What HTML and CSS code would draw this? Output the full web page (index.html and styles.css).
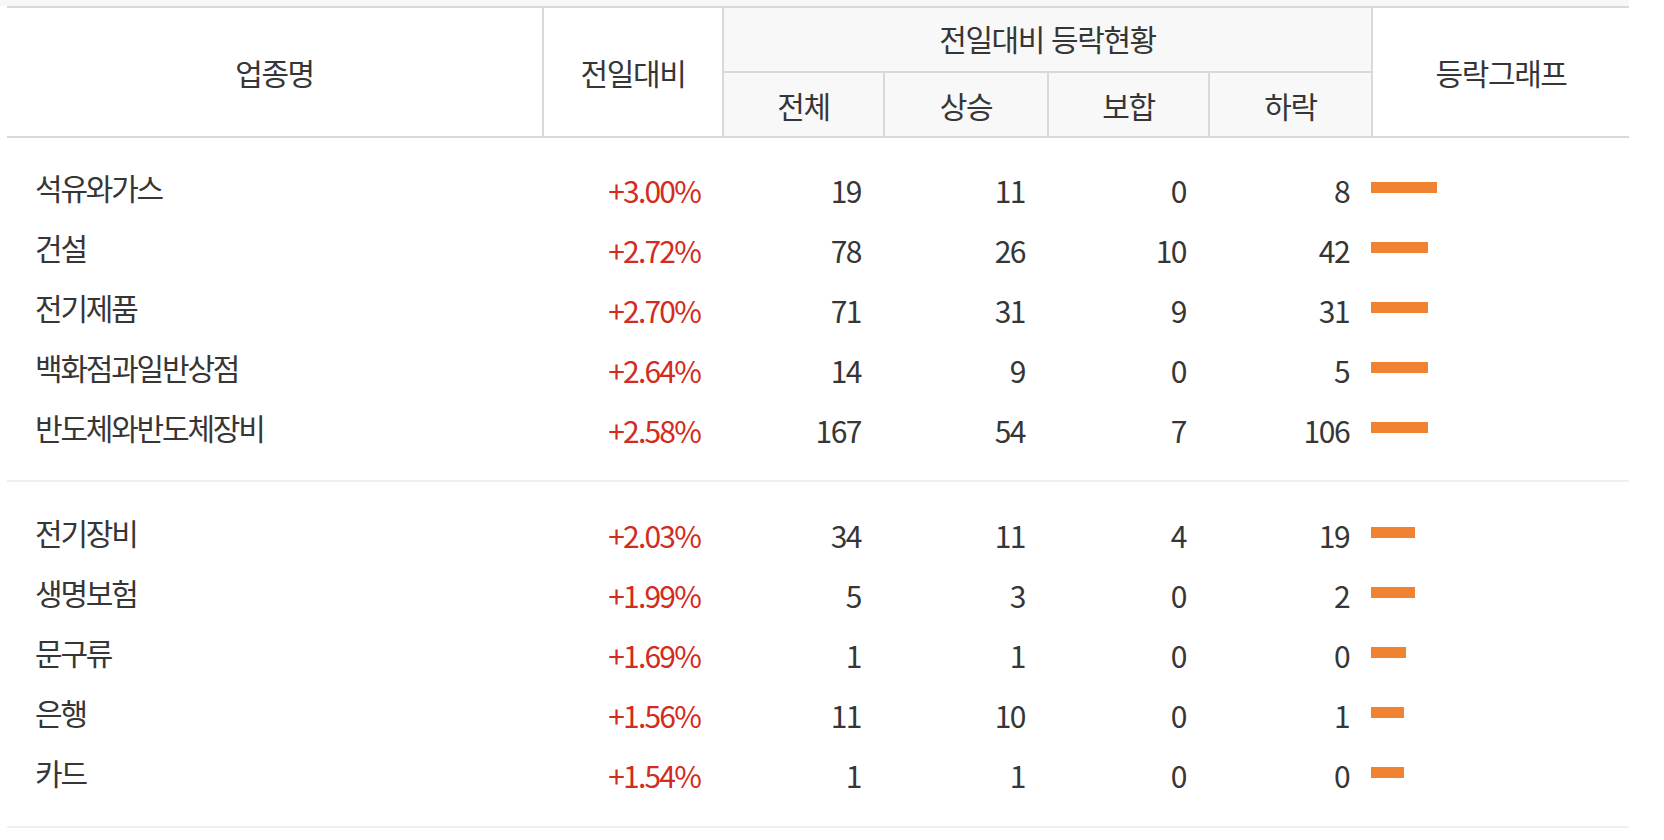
FILE: index.html
```html
<!DOCTYPE html>
<html lang="ko">
<head>
<meta charset="utf-8">
<title>업종별 등락현황</title>
<link rel="stylesheet" href="styles.css">
</head>
<body>
<div class="topbar"></div>
<table class="sector">
  <colgroup>
    <col class="c-name"><col class="c-rate"><col class="c-num"><col class="c-num2"><col class="c-num"><col class="c-num3"><col class="c-graph">
  </colgroup>
  <thead>
    <tr class="h1">
      <th rowspan="2" class="plain">업종명</th>
      <th rowspan="2" class="plain sep">전일대비</th>
      <th colspan="4" class="group sep">전일대비 등락현황</th>
      <th rowspan="2" class="plain sep">등락그래프</th>
    </tr>
    <tr class="h2">
      <th class="group sep">전체</th>
      <th class="group sep">상승</th>
      <th class="group sep">보합</th>
      <th class="group sep">하락</th>
    </tr>
  </thead>
  <tbody>
    <tr class="spacer s-top1"><td colspan="7"></td></tr>
    <tr><td class="name">석유와가스</td><td class="rate">+3.00%</td><td class="num">19</td><td class="num">11</td><td class="num">0</td><td class="num">8</td><td class="graph"><div class="bar" style="width:66px"></div></td></tr>
    <tr><td class="name">건설</td><td class="rate">+2.72%</td><td class="num">78</td><td class="num">26</td><td class="num">10</td><td class="num">42</td><td class="graph"><div class="bar" style="width:57px"></div></td></tr>
    <tr><td class="name">전기제품</td><td class="rate">+2.70%</td><td class="num">71</td><td class="num">31</td><td class="num">9</td><td class="num">31</td><td class="graph"><div class="bar" style="width:57px"></div></td></tr>
    <tr><td class="name">백화점과일반상점</td><td class="rate">+2.64%</td><td class="num">14</td><td class="num">9</td><td class="num">0</td><td class="num">5</td><td class="graph"><div class="bar" style="width:57px"></div></td></tr>
    <tr><td class="name">반도체와반도체장비</td><td class="rate">+2.58%</td><td class="num">167</td><td class="num">54</td><td class="num">7</td><td class="num">106</td><td class="graph"><div class="bar" style="width:57px"></div></td></tr>
    <tr class="spacer s-end1"><td colspan="7"></td></tr>
    <tr class="spacer s-top2"><td colspan="7"></td></tr>
    <tr><td class="name">전기장비</td><td class="rate">+2.03%</td><td class="num">34</td><td class="num">11</td><td class="num">4</td><td class="num">19</td><td class="graph"><div class="bar" style="width:44px"></div></td></tr>
    <tr><td class="name">생명보험</td><td class="rate">+1.99%</td><td class="num">5</td><td class="num">3</td><td class="num">0</td><td class="num">2</td><td class="graph"><div class="bar" style="width:44px"></div></td></tr>
    <tr><td class="name">문구류</td><td class="rate">+1.69%</td><td class="num">1</td><td class="num">1</td><td class="num">0</td><td class="num">0</td><td class="graph"><div class="bar" style="width:35px"></div></td></tr>
    <tr><td class="name">은행</td><td class="rate">+1.56%</td><td class="num">11</td><td class="num">10</td><td class="num">0</td><td class="num">1</td><td class="graph"><div class="bar" style="width:33px"></div></td></tr>
    <tr><td class="name">카드</td><td class="rate">+1.54%</td><td class="num">1</td><td class="num">1</td><td class="num">0</td><td class="num">0</td><td class="graph"><div class="bar" style="width:33px"></div></td></tr>
    <tr class="spacer s-end2"><td colspan="7"></td></tr>
  </tbody>
</table>
</body>
</html>
```

FILE: styles.css
```css
html, body {
  margin: 0;
  padding: 0;
  background: #ffffff;
}
body {
  font-family: "Noto Sans CJK KR", "Noto Sans", sans-serif;
  color: #363636;
}
.topbar {
  width: 1629px;
  height: 6px;
  background: #f7f7f7;
}
.sector {
  margin-left: 7px;
  width: 1622px;
  border-collapse: separate;
  border-spacing: 0;
  table-layout: fixed;
  font-size: 30px;
}
.c-name { width: 535px; }
.c-rate { width: 180px; }
.c-num { width: 161px; }
.c-num2 { width: 164px; }
.c-num3 { width: 163px; }
.c-graph { width: 258px; }

th, td {
  box-sizing: border-box;
  padding: 0;
  line-height: 1;
  white-space: nowrap;
}
th {
  font-weight: normal;
  letter-spacing: -1.4px;
  text-align: center;
}
th.sep { border-left: 2px solid #d9d9d9; }
th.plain {
  background: #ffffff;
  border-bottom: 2px solid #d9d9d9;
}
th.group { background: #f8f8f8; }
.h1 th {
  border-top: 2px solid #d9d9d9;
  height: 67px;
}
.h1 th.group {
  border-bottom: 2px solid #d9d9d9;
  padding-bottom: 4px;
}
.h2 th {
  height: 65px;
  border-bottom: 2px solid #d9d9d9;
}

td {
  height: 60px;
  padding-right: 22px;
}
td.name {
  padding-left: 28px;
  padding-bottom: 6px;
  letter-spacing: -2.2px;
}
td.rate {
  text-align: right;
  color: #d22b20;
  letter-spacing: -1.8px;
}
td.num {
  text-align: right;
  letter-spacing: -1.5px;
}
td.graph { padding: 0; }
.bar {
  height: 11px;
  background: #f08332;
  margin-bottom: 6px;
}
.spacer td { padding: 0; }
.s-top1 td { height: 22px; }
.s-end1 td { height: 22px; border-bottom: 2px solid #efefef; }
.s-top2 td { height: 23px; }
.s-end2 td { height: 23px; border-bottom: 2px solid #efefef; }
```
